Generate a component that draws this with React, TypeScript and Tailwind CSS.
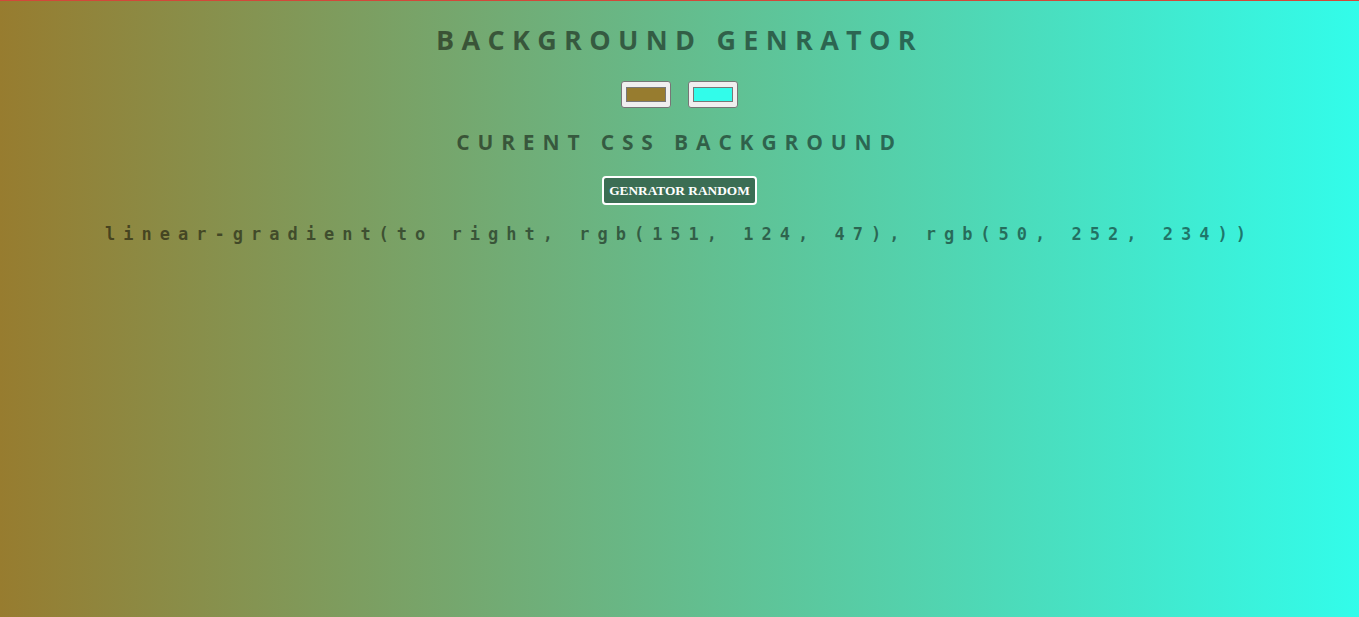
import { useState } from 'react';

const toRgb = (hex: string) => {
  const n = parseInt(hex.slice(1), 16);
  return `rgb(${(n >> 16) & 255}, ${(n >> 8) & 255}, ${n & 255})`;
};

const randomHex = () =>
  '#' + Math.floor(Math.random() * 0xffffff).toString(16).padStart(6, '0');

interface SwatchProps {
  color: string;
  onChange: (color: string) => void;
}

const Swatch = ({ color, onChange }: SwatchProps) => (
  <label className="relative block w-[50px] h-[27px] px-[4px] py-[5px] bg-[#efefef] border border-[#767676] rounded-[3px] cursor-pointer">
    <div className="w-full h-full border border-[#777777]" style={{ backgroundColor: color }} />
    <input
      type="color"
      value={color}
      onChange={e => onChange(e.target.value)}
      className="absolute inset-0 opacity-0 cursor-pointer"
    />
  </label>
);

const App = () => {
  const [color1, setColor1] = useState('#977c2f');
  const [color2, setColor2] = useState('#32fcea');

  const css = `linear-gradient(to right, ${toRgb(color1)}, ${toRgb(color2)})`;

  return (
    <div
      className="min-h-screen border-t border-[#d2483a] flex flex-col items-center text-black/50 font-['Open_Sans',sans-serif]"
      style={{ background: css }}
    >
      <h1 className="mt-[19px] text-[27px] leading-[40px] font-bold tracking-[7.3px]">
        BACKGROUND GENRATOR
      </h1>
      <div className="mt-[21px] flex gap-[17px]">
        <Swatch color={color1} onChange={setColor1} />
        <Swatch color={color2} onChange={setColor2} />
      </div>
      <h3 className="mt-[19px] text-[21px] leading-[30px] font-bold tracking-[7.85px]">
        CURENT CSS BACKGROUND
      </h3>
      <button
        onClick={() => {
          setColor1(randomHex());
          setColor2(randomHex());
        }}
        className="mt-[19px] h-[29px] px-[5px] bg-[#3b6e54] text-white text-[13.33px] font-bold border-2 border-white rounded-[4px] font-['Liberation_Serif',serif]"
      >
        GENRATOR RANDOM
      </button>
      <p className="mt-[14px] text-[17px] leading-[30px] font-bold tracking-[8px] font-['DejaVu_Sans_Mono',monospace]">
        {css}
      </p>
    </div>
  );
};

export default App;
